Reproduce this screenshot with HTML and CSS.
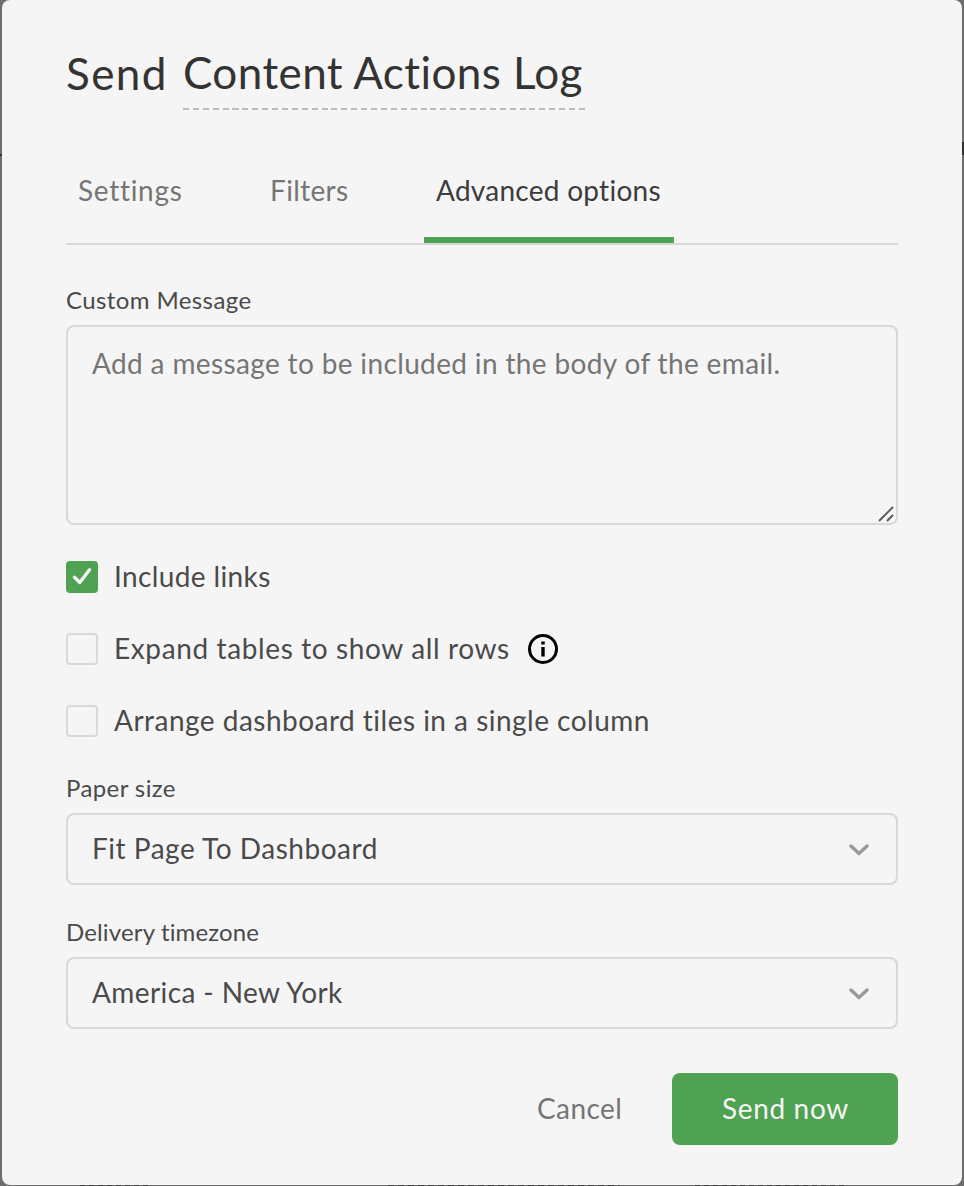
FILE: index.html
```html
<!DOCTYPE html>
<html lang="en">
<head>
<meta charset="utf-8">
<title>Send Content Actions Log</title>
<link rel="stylesheet" href="styles.css">
</head>
<body>
<main class="dialog">
  <h1 class="title"><span class="title-verb">Send</span><span class="title-name">Content Actions Log</span></h1>
  <nav class="tabs">
    <a class="tab tab-settings">Settings</a>
    <a class="tab tab-filters">Filters</a>
    <a class="tab tab-advanced active">Advanced options</a>
  </nav>
  <label class="label label-message">Custom Message</label>
  <div class="textarea">
    <span class="placeholder">Add a message to be included in the body of the email.</span>
    <svg class="grip" width="16" height="16" viewBox="0 0 16 16"><path d="M1 15 15 1M9 15l6-6"/></svg>
  </div>
  <div class="checks">
    <div class="check"><span class="box checked"><svg width="32" height="32" viewBox="0 0 32 32"><path d="M8.5 16.2l5.3 5.3L23.5 8.8"/></svg></span><span class="t-links">Include links</span></div>
    <div class="check"><span class="box"></span><span class="t-expand">Expand tables to show all rows</span>
      <svg class="info" width="30" height="30" viewBox="0 0 30 30"><circle cx="15" cy="15" r="13.5"/><path d="M13.3 7.5h3.4v3h-3.4zM13.3 13h3.4v9.5h-3.4z"/></svg></div>
    <div class="check"><span class="box"></span><span class="t-arrange">Arrange dashboard tiles in a single column</span></div>
  </div>
  <label class="label label-paper">Paper size</label>
  <div class="select"><span class="t-fit">Fit Page To Dashboard</span><svg class="chevron" width="20" height="12" viewBox="0 0 20 12"><path d="M2 2l8 7.5L18 2"/></svg></div>
  <label class="label label-zone">Delivery timezone</label>
  <div class="select"><span class="t-zone">America - New York</span><svg class="chevron" width="20" height="12" viewBox="0 0 20 12"><path d="M2 2l8 7.5L18 2"/></svg></div>
  <footer class="actions"><button class="cancel">Cancel</button><button class="send">Send now</button></footer>
</main>
</body>
</html>
```
FILE: styles.css
```css
* { box-sizing: border-box; }
body {
  margin: 0; height: 1186px; overflow: hidden; padding: 0 2px 1px;
  font-family: Lato, "Open Sans", sans-serif; font-size: 28px; color: #4a4a4a;
  font-variant-ligatures: none;
  background:
    linear-gradient(#333, #333) 0 154px / 2px 2px no-repeat,
    linear-gradient(#303030, #303030) 100% 142px / 2px 13px no-repeat,
    repeating-linear-gradient(90deg, #444 0 5px, #6a6a6a 5px 9px) 80px 1185px / 72px 1px no-repeat,
    repeating-linear-gradient(90deg, #444 0 6px, #6a6a6a 6px 10px) 388px 1185px / 232px 1px no-repeat,
    repeating-linear-gradient(90deg, #444 0 5px, #6a6a6a 5px 9px) 695px 1185px / 153px 1px no-repeat,
    #6e6e6e;
}
.dialog { display: flex; flex-direction: column; height: 1185px; padding: 0 64px; background: #f5f5f5; border-radius: 8px; }
.title { display: flex; gap: 17px; margin: 0; padding-top: 37px; height: 110px; font-size: 44px; font-weight: 400; line-height: 70px; color: #333; }
.title-verb { width: 100px; padding-top: 1px; white-space: nowrap; letter-spacing: 1.4px; }
.title-name {
  width: 402px; height: 73px; white-space: nowrap; letter-spacing: 0.42px;
  background: repeating-linear-gradient(90deg, #bbb 0 6px, transparent 6px 9.9px) 0 100% / 100% 2px no-repeat;
}
.tabs { display: flex; gap: 64px; margin-top: 28px; height: 107px; border-bottom: 2px solid #d8d8d8; line-height: 104px; color: #757575; }
.tab { height: 105px; padding: 0 12px; white-space: nowrap; }
.tab-settings { width: 128px; letter-spacing: 0.7px; }
.tab-filters { width: 102px; letter-spacing: 0.35px; }
.tab-advanced { width: 250px; letter-spacing: 0.27px; }
.tab.active { color: #3c3c3c; border-bottom: 6px solid #4fa251; }
.label { height: 30px; line-height: 28px; font-size: 24px; letter-spacing: 0.4px; }
.label-message { margin-top: 41px; }
.textarea { position: relative; height: 200px; margin-top: 9px; padding: 16px 24px; border: 2px solid #d8d8d8; border-radius: 8px; line-height: 40px; color: #757575; white-space: nowrap; letter-spacing: 0.36px; }
.grip { position: absolute; right: 2px; bottom: 1px; fill: none; stroke: #555; stroke-width: 1.8; }
.checks { display: flex; flex-direction: column; gap: 40px; margin-top: 36px; }
.check { display: flex; align-items: center; height: 32px; gap: 16px; line-height: 30px; white-space: nowrap; }
.check > span:not(.box) { padding-bottom: 2px; }
.box { width: 32px; height: 32px; border: 2px solid #d8d8d8; border-radius: 4px; }
.box.checked { border: 0; background: #4fa251; }
.box svg { display: block; fill: none; stroke: #f5f5f5; stroke-width: 3.4; stroke-linecap: round; stroke-linejoin: round; }
.t-links { letter-spacing: 0.38px; }
.t-expand { width: 395px; letter-spacing: 0.62px; }
.t-arrange { letter-spacing: 0.48px; }
.info { margin-left: 3px; }
.info circle { fill: none; stroke: #000; stroke-width: 3; }
.label-paper { margin-top: 37px; }
.label-zone { margin-top: 33px; letter-spacing: 0.15px; }
.select { display: flex; align-items: center; justify-content: space-between; height: 72px; margin-top: 9px; padding: 0 27px 2px 24px; border: 2px solid #d8d8d8; border-radius: 8px; }
.t-fit { letter-spacing: 0.52px; }
.t-zone { letter-spacing: 0.4px; }
.chevron { margin-top: 4px; fill: none; stroke: #999; stroke-width: 3.4; stroke-linecap: round; stroke-linejoin: round; }
.actions { display: flex; justify-content: flex-end; gap: 50px; margin-top: 44px; }
.actions button { height: 72px; border: 0; padding: 0 0 2px; font: inherit; white-space: nowrap; }
.actions .cancel { width: 85px; background: none; color: #757575; text-align: left; letter-spacing: 0.4px; }
.actions .send { width: 226px; background: #4fa251; color: #f5f5f5; border-radius: 8px; padding-left: 50px; text-align: left; letter-spacing: 0.65px; }
```
